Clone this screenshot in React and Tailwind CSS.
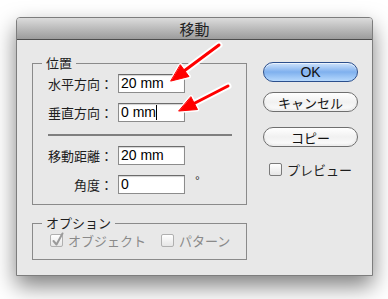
import React from 'react';

const jp = { fontFamily: '"Noto Sans CJK JP", "Noto Sans", sans-serif' };
const latin = { fontFamily: '"Liberation Sans", Arial, sans-serif' };

const Field = ({ label, value, caret, unit }) => (
  <div className="flex items-center h-[19px]">
    <span className="w-[65px] text-right text-[13px] leading-none text-[#1e1e1e] whitespace-nowrap">{label}</span>
    <div
      className="ml-[5px] w-[67px] h-[19px] bg-white border border-[#8c8c8c] border-t-[#6c6c6c] shadow-[inset_0_1px_1px_rgba(0,0,0,0.18)] flex items-center pl-[2px] text-[14px] text-black"
      style={latin}
    >
      {value}
      {caret && <span className="w-px h-[15px] bg-black" />}
    </div>
    {unit && <span className="ml-[10px] -mt-[8px] text-[12px] text-[#333]" style={latin}>{unit}</span>}
  </div>
);

const Check = ({ checked, disabled }) => (
  <span
    className={`relative block shrink-0 w-[13px] h-[13px] border rounded-[2px] bg-gradient-to-b from-white to-[#e6e6e6] ${
      disabled ? 'border-[#b0b0b0]' : 'border-[#7a7a7a]'
    }`}
  >
    {checked && (
      <svg className="absolute -top-[3px] left-0" width="14" height="15" viewBox="0 0 14 15">
        <path d="M2.5 9 L5.5 12.5 L11.5 1.5" fill="none" stroke="#9a9a9a" strokeWidth="2" strokeLinecap="round" strokeLinejoin="round" />
      </svg>
    )}
  </span>
);

const AquaButton = ({ children, primary, className = '' }) => (
  <div
    className={`h-[20px] w-[95px] rounded-full border flex items-center justify-center text-[13px] leading-none text-[#111] ${
      primary
        ? 'border-[#2c4f8c] bg-gradient-to-b from-[#cfe3fb] via-[#7fb0ee] to-[#b5d8fc] shadow-[inset_0_1px_0_rgba(255,255,255,0.6)]'
        : 'border-[#6f6f6f] bg-gradient-to-b from-white via-[#f1f1f1] to-[#fdfdfd] shadow-[inset_0_-2px_2px_rgba(0,0,0,0.06)]'
    } ${className}`}
  >
    <span style={primary ? latin : jp} className={primary ? 'text-[14px]' : ''}>{children}</span>
  </div>
);

export default function App() {
  return (
    <div className="relative w-[388px] h-[299px] bg-white overflow-hidden" style={jp}>
      <div className="pt-[17px] pl-[16px]">
        <div className="w-[357px] border border-[#7d7d7d] rounded-t-[4px] bg-[#e8e8e8] shadow-[0_10px_22px_rgba(0,0,0,0.5)]">
          {/* title bar */}
          <div className="h-[22px] rounded-t-[3px] border-b border-[#4d4d4d] bg-gradient-to-b from-[#dcdcdc] to-[#9c9c9c] flex items-center justify-center">
            <span className="text-[15px] leading-none text-[#222]">移動</span>
          </div>

          <div className="flex pl-[15px] pt-[22px] pb-[15px]">
            {/* left column */}
            <div className="w-[215px] mt-px">
              <div className="relative border border-[#8a8a8a] pl-[15px] pt-[10px] pb-[10px]">
                <span className="absolute -top-[9px] left-[9px] px-[4px] bg-[#e8e8e8] text-[13px] leading-[16px] text-[#1e1e1e]">位置</span>
                <Field label="水平方向：" value="20 mm" />
                <div className="mt-[10px]">
                  <Field label="垂直方向：" value="0 mm" caret />
                </div>
                <div className="mt-[12px] w-[184px] h-[2px] bg-[#7f7f7f]" />
                <div className="mt-[10px]">
                  <Field label="移動距離：" value="20 mm" />
                </div>
                <div className="mt-[10px]">
                  <Field label="角度：" value="0" unit="°" />
                </div>
              </div>

              <div className="relative mt-[18px] h-[37px] border border-[#8a8a8a] pl-[17px] pt-[10px] flex items-start">
                <span className="absolute -top-[9px] left-[9px] px-[4px] bg-[#e8e8e8] text-[13px] leading-[16px] text-[#1e1e1e]">オプション</span>
                <div className="flex items-center">
                  <Check checked disabled />
                  <span className="ml-[5px] text-[13px] leading-none text-[#8a8a8a]">オブジェクト</span>
                  <span className="ml-[15px]"><Check disabled /></span>
                  <span className="ml-[5px] text-[13px] leading-none text-[#8a8a8a]">パターン</span>
                </div>
              </div>
            </div>

            {/* right column */}
            <div className="ml-[16px] flex flex-col">
              <AquaButton primary>OK</AquaButton>
              <AquaButton className="mt-[10px]">キャンセル</AquaButton>
              <AquaButton className="mt-[15px]">コピー</AquaButton>
              <div className="mt-[16px] ml-[6px] flex items-center">
                <Check />
                <span className="ml-[5px] text-[13px] leading-none text-[#1e1e1e]">プレビュー</span>
              </div>
            </div>
          </div>
        </div>
      </div>

      {/* annotation arrows */}
      <svg className="absolute inset-0 pointer-events-none" width="388" height="299" viewBox="0 0 388 299">
        <g stroke="#ffffff" strokeLinecap="round" strokeLinejoin="round">
          <line x1="219" y1="45" x2="184" y2="71" strokeWidth="7" />
          <polygon points="171,81 189,76.5 180.5,65" fill="#ffffff" strokeWidth="4" />
          <line x1="228" y1="86" x2="193" y2="104" strokeWidth="7" />
          <polygon points="179,111 197.5,109.5 191,97" fill="#ffffff" strokeWidth="4" />
        </g>
        <g stroke="#ff0000" strokeLinecap="round" strokeLinejoin="round">
          <line x1="219" y1="45" x2="184" y2="71" strokeWidth="3" />
          <polygon points="171,81 189,76.5 180.5,65" fill="#ff0000" strokeWidth="1" />
          <line x1="228" y1="86" x2="193" y2="104" strokeWidth="3" />
          <polygon points="179,111 197.5,109.5 191,97" fill="#ff0000" strokeWidth="1" />
        </g>
      </svg>
    </div>
  );
}
